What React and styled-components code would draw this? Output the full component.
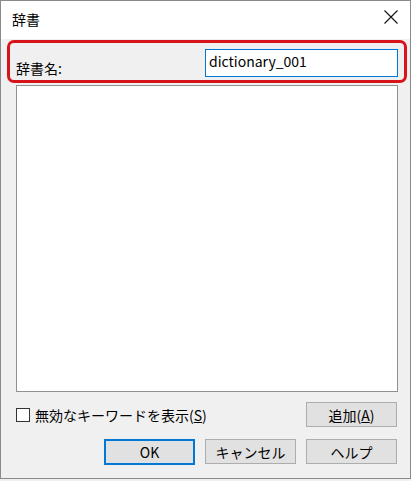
import React from "react";
import styled, { createGlobalStyle } from "styled-components";

const GlobalStyle = createGlobalStyle`
  html, body {
    margin: 0;
    padding: 0;
    background: #f0f0f0;
  }
  body {
    font-family: "Noto Sans CJK JP", "Noto Sans", sans-serif;
    font-size: 14px;
    color: #000;
  }
`;

const App = () => {
  return (
    <>
      <GlobalStyle />
      <Window>
        <TitleBar>
          <Title>辞書</Title>
          <CloseButton aria-label="close">
            <svg width="14" height="14" viewBox="0 0 14 14">
              <path d="M0.5 0.5 L13.5 13.5 M13.5 0.5 L0.5 13.5" stroke="#111" strokeWidth="1.1" fill="none" />
            </svg>
          </CloseButton>
        </TitleBar>
        <Body>
          <Highlight>
            <Label>辞書名:</Label>
            <TextInput>dictionary_001</TextInput>
          </Highlight>
          <Content>
            <ListBox />
            <OptionRow>
              <CheckLabel>
                <CheckBox />
                <span>無効なキーワードを表示(<u>S</u>)</span>
              </CheckLabel>
              <Button>
                <span>追加(<u>A</u>)</span>
              </Button>
            </OptionRow>
            <ButtonRow>
              <Button $primary>OK</Button>
              <Button>キャンセル</Button>
              <Button>ヘルプ</Button>
            </ButtonRow>
          </Content>
        </Body>
      </Window>
    </>
  );
};

export default App;

const Window = styled.div`
  width: 411px;
  height: 479px;
  box-sizing: border-box;
  border: 1px solid #8a8a8a;
  background: #f0f0f0;
  display: flex;
  flex-direction: column;
`;

const TitleBar = styled.div`
  height: 38px;
  background: #fff;
  display: flex;
  align-items: center;
  padding-left: 11px;
`;

const Title = styled.div`
  line-height: 20px;
  margin-top: -3px;
`;

const CloseButton = styled.div`
  margin-left: auto;
  margin-right: 12px;
  margin-top: -6px;
  width: 14px;
  height: 14px;
  display: flex;
`;

const Body = styled.div`
  flex: 1;
  display: flex;
  flex-direction: column;
  padding: 1px 3px 0 6px;
`;

const Highlight = styled.div`
  height: 43px;
  box-sizing: border-box;
  border: 3px solid #d7141b;
  border-radius: 7px;
  display: flex;
  align-items: flex-start;
  padding: 6px 6px 0 6px;
`;

const Label = styled.div`
  line-height: 20px;
  padding-top: 9px;
`;

const TextInput = styled.div`
  margin-left: auto;
  width: 193px;
  height: 28px;
  box-sizing: border-box;
  border: 1px solid #0078d7;
  background: #fff;
  padding: 0 0 0 3px;
  line-height: 22px;
`;

const Content = styled.div`
  display: flex;
  flex-direction: column;
  margin: 0 9px;
`;

const ListBox = styled.div`
  margin-top: 2px;
  height: 307px;
  box-sizing: border-box;
  background: #fff;
  border: 1px solid #8f9093;
`;

const OptionRow = styled.div`
  margin-top: 10px;
  display: flex;
  align-items: center;
  justify-content: space-between;
  padding-right: 1px;
`;

const CheckLabel = styled.label`
  display: flex;
  align-items: center;
  gap: 5px;
  line-height: 20px;
`;

const CheckBox = styled.span`
  width: 14px;
  height: 14px;
  box-sizing: border-box;
  border: 1px solid #333;
  background: #fff;
`;

const ButtonRow = styled.div`
  margin-top: 12px;
  display: flex;
  justify-content: flex-end;
  gap: 10px;
  padding-right: 1px;
`;

const Button = styled.div`
  width: 91px;
  height: ${(p) => (p.$primary ? "26px" : "25px")};
  box-sizing: border-box;
  background: #e1e1e1;
  border: ${(p) => (p.$primary ? "2px solid #0078d7" : "1px solid #adadad")};
  display: flex;
  align-items: center;
  justify-content: center;
  line-height: 20px;
`;
